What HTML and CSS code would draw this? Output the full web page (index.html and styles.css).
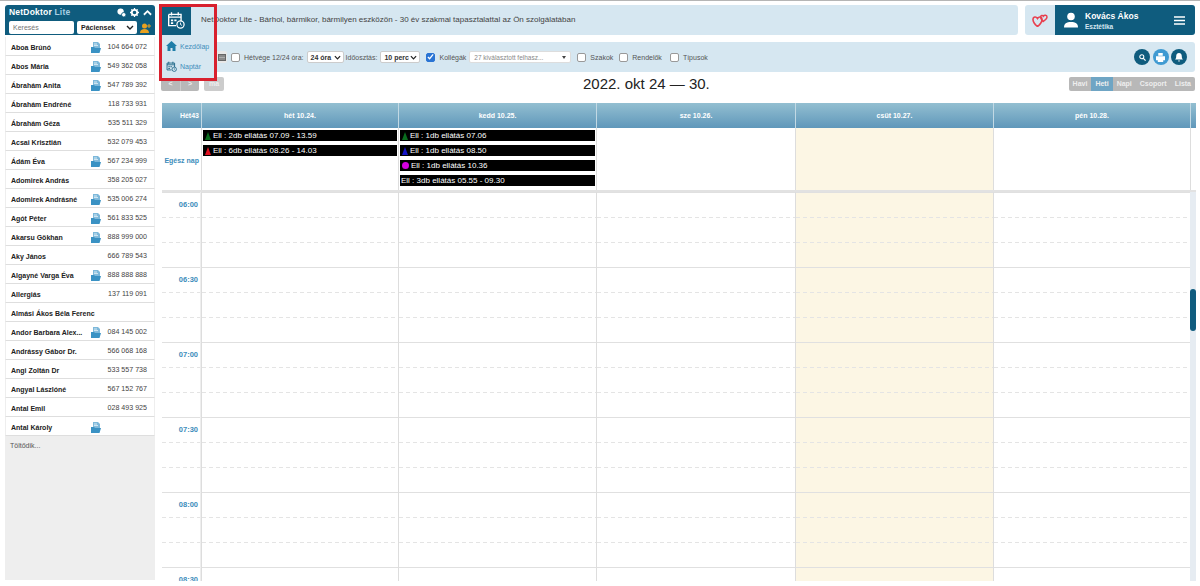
FILE: index.html
```html
<!DOCTYPE html>
<html lang="en">
<head>
    <meta charset="UTF-8">
    <meta name="viewport" content="width=device-width, initial-scale=1.0">
    <title>NetDoktor Lite - Naptár</title>
    <link rel="stylesheet" href="styles.css">
</head>
<body>
    <svg class="icon-defs" width="0" height="0">
        <symbol id="i-doc" viewBox="0 0 10 11">
            <path d="M2 0h5l2 2v4H2z" fill="#7db8da"/>
            <path d="M3 2h3M3 3.600h4" stroke="#fff" stroke-width=".7"/>
            <path d="M0 5h3l1 1h6L8.500 11H0z" fill="#3a92c4"/>
        </symbol>
        <symbol id="i-cal" viewBox="0 0 16 16">
            <path d="M1.500 3h11v6M8 13H1.500V3" fill="none" stroke="currentColor" stroke-width="1.200"/>
            <path d="M4 1v3M10 1v3M1.500 5.500h11" stroke="currentColor" stroke-width="1.200"/>
            <path d="M3.500 7.500h2v1.500h-2zM6.500 7.500h2v1.500h-2zM3.500 10h2v1.500h-2z" fill="currentColor"/>
            <circle cx="12" cy="12" r="3.200" fill="none" stroke="currentColor" stroke-width="1.100"/>
            <path d="M12 10.300V12l1.300.8" fill="none" stroke="currentColor" stroke-width=".8"/>
        </symbol>
        <symbol id="i-chev" viewBox="0 0 8 5">
            <path d="M1 1l3 3 3-3" fill="none" stroke="#222" stroke-width="1.400"/>
        </symbol>
    </svg>

    <aside class="sidebar">
        <div class="side-head">
            <div class="side-title">
                <span class="brand">NetDoktor <em>Lite</em></span>
                <span class="side-tools">
                    <svg width="9" height="9" viewBox="0 0 10 10"><circle cx="4" cy="4" r="3.500" fill="#fff"/><circle cx="7.500" cy="7.500" r="2.500" fill="#fff" stroke="#0f5c7e"/></svg>
                    <svg width="9" height="9" viewBox="0 0 10 10"><circle cx="5" cy="5" r="3" fill="none" stroke="#fff" stroke-width="2"/><path d="M5 0v2M5 8v2M0 5h2M8 5h2M1.500 1.500l1.400 1.400M7.100 7.100l1.400 1.400M1.500 8.500l1.400-1.400M7.100 2.900l1.400-1.400" stroke="#fff" stroke-width="1.400"/></svg>
                    <svg width="9" height="7" viewBox="0 0 10 7"><path d="M1 6l4-4 4 4" fill="none" stroke="#fff" stroke-width="2"/></svg>
                </span>
            </div>
            <div class="side-search">
                <input class="search-input" type="text" placeholder="Keresés">
                <span class="search-select">Páciensek<svg width="8" height="5"><use href="#i-chev"/></svg></span>
                <svg width="11" height="10" viewBox="0 0 11 10"><circle cx="4.500" cy="3" r="2.500" fill="#e9a11f"/><path d="M0 10c0-3 2-4 4.500-4S9 7 9 10z" fill="#e9a11f"/><path d="M9 1v4M7 3h4" stroke="#e9a11f"/></svg>
            </div>
        </div>
        <ul class="patients">
            <li><b>Aboa Brúnó</b><svg class="doc"><use href="#i-doc"/></svg><span>104 664 072</span></li>
            <li><b>Abos Mária</b><svg class="doc"><use href="#i-doc"/></svg><span>549 362 058</span></li>
            <li><b>Ábrahám Anita</b><svg class="doc"><use href="#i-doc"/></svg><span>547 789 392</span></li>
            <li><b>Ábrahám Endréné</b><span>118 733 931</span></li>
            <li><b>Ábrahám Géza</b><span>535 511 329</span></li>
            <li><b>Acsai Krisztián</b><span>532 079 453</span></li>
            <li><b>Ádám Éva</b><svg class="doc"><use href="#i-doc"/></svg><span>567 234 999</span></li>
            <li><b>Adomirek András</b><span>358 205 027</span></li>
            <li><b>Adomirek Andrásné</b><svg class="doc"><use href="#i-doc"/></svg><span>535 006 274</span></li>
            <li><b>Agót Péter</b><svg class="doc"><use href="#i-doc"/></svg><span>561 833 525</span></li>
            <li><b>Akarsu Gökhan</b><svg class="doc"><use href="#i-doc"/></svg><span>888 999 000</span></li>
            <li><b>Aky János</b><span>666 789 543</span></li>
            <li><b>Algayné Varga Éva</b><svg class="doc"><use href="#i-doc"/></svg><span>888 888 888</span></li>
            <li><b>Allergiás</b><span>137 119 091</span></li>
            <li><b>Almási Ákos Béla Ferenc</b></li>
            <li><b>Andor Barbara Alex...</b><svg class="doc"><use href="#i-doc"/></svg><span>084 145 002</span></li>
            <li><b>Andrássy Gábor Dr.</b><span>566 068 168</span></li>
            <li><b>Angi Zoltán Dr</b><span>533 557 738</span></li>
            <li><b>Angyal Lászlóné</b><span>567 152 767</span></li>
            <li><b>Antal Emil</b><span>028 493 925</span></li>
            <li><b>Antal Károly</b><svg class="doc"><use href="#i-doc"/></svg></li>
        </ul>
        <div class="loading">Töltődik...</div>
    </aside>

    <main class="main">
        <div class="top-row">
            <div class="banner">NetDoktor Lite - Bárhol, bármikor, bármilyen eszközön - 30 év szakmai tapasztalattal az Ön szolgálatában</div>
            <div class="user-box">
                <div class="user-logo">
                    <svg width="16" height="13" viewBox="0 0 16 13"><path d="M5.500 12.500C2.500 10 .8 7.500 1 5 1.200 2.800 4 2.200 5.500 4.500 7 2.200 9.800 2.800 10 5c.2 2.500-1.500 5-4.500 7.500z" fill="none" stroke="#e8404f" stroke-width="1.600"/><path d="M11 7.500C9.500 6 8.500 4.500 8.500 3 8.700 1.300 10.500.9 11.300 2.200 12.300 .9 15 1 15 3c0 1.800-2 3.300-4 4.500z" fill="none" stroke="#e8404f" stroke-width="1.500"/></svg>
                </div>
                <div class="user-info">
                    <svg width="16" height="16" viewBox="0 0 16 16"><circle cx="8" cy="4.500" r="3.800" fill="#fff"/><path d="M1 15.500c0-4 2.500-5.500 7-5.500s7 1.500 7 5.500z" fill="#fff"/></svg>
                    <div class="user-name"><b>Kovács Ákos</b><small>Esztétika</small></div>
                    <svg width="11" height="9" viewBox="0 0 11 9"><path d="M0 1h11M0 4.500h11M0 8h11" stroke="#fff" stroke-width="1.600"/></svg>
                </div>
            </div>
        </div>

        <div class="toolbar">
            <span class="cal-btn"><svg width="8" height="8" viewBox="0 0 8 8"><path d="M0 1h8v7H0z" fill="#666"/><path d="M1 3h6M1 4.500h6M1 6h6" stroke="#ddd" stroke-width=".6"/></svg></span>
            <span class="check"></span><label>Hétvége 12/24 óra:</label>
            <span class="mini-select s-ora">24 óra<svg width="7" height="5"><use href="#i-chev"/></svg></span>
            <label>Időosztás:</label>
            <span class="mini-select s-perc">10 perc<svg width="7" height="5"><use href="#i-chev"/></svg></span>
            <span class="check on"><svg width="8" height="8" viewBox="0 0 8 8"><path d="M1 4l2 2 4-5" fill="none" stroke="#fff" stroke-width="1.400"/></svg></span><label>Kollégák</label>
            <span class="multi">27 kiválasztott felhasz...<i></i></span>
            <span class="check"></span><label class="wide">Szakok</label>
            <span class="check"></span><label class="wider">Rendelők</label>
            <span class="check"></span><label>Típusok</label>
            <span class="round-btns">
                <span class="round"><svg width="7" height="7" viewBox="0 0 8 8"><circle cx="3.200" cy="3.200" r="2.300" fill="none" stroke="#fff" stroke-width="1.200"/><path d="M5 5l2.500 2.500" stroke="#fff" stroke-width="1.400"/></svg></span>
                <span class="round light"><svg width="9" height="9" viewBox="0 0 10 10"><path d="M2.500 0h5v3h-5zM0 3.500h10V8H8v2H2V8H0z" fill="#fff"/></svg></span>
                <span class="round"><svg width="8" height="9" viewBox="0 0 8 9"><path d="M4 0c2 0 2.800 1.500 2.800 3.500 0 1.500.4 2.300 1.200 3H0c.8-.7 1.200-1.500 1.200-3C1.200 1.500 2 0 4 0zM3 7.500h2L4 9z" fill="#fff"/></svg></span>
            </span>
        </div>

        <div class="cal-nav">
            <div class="nav-left">
                <span class="btn-group arrows"><span>&lt;</span><span>&gt;</span></span>
                <span class="btn-group today"><span>ma</span></span>
            </div>
            <h2>2022. okt 24 — 30.</h2>
            <div class="btn-group views"><span>Havi</span><span class="active">Heti</span><span>Napi</span><span>Csoport</span><span>Lista</span></div>
        </div>

        <div class="calendar">
            <div class="cal-row cal-head">
                <div class="axis">Hét43</div><div>hét 10.24.</div><div>kedd 10.25.</div><div>sze 10.26.</div><div>csüt 10.27.</div><div>pén 10.28.</div><div></div>
            </div>
            <div class="cal-row all-day">
                <div class="axis">Egész nap</div>
                <div class="day">
                    <div class="evt"><i class="tri green"></i>Ell : 2db ellátás 07.09 - 13.59</div>
                    <div class="evt"><i class="tri red"></i>Ell : 6db ellátás 08.26 - 14.03</div>
                </div>
                <div class="day">
                    <div class="evt"><i class="tri green"></i>Ell : 1db ellátás 07.06</div>
                    <div class="evt"><i class="tri blue"></i>Ell : 1db ellátás 08.50</div>
                    <div class="evt"><i class="dot"></i>Ell : 1db ellátás 10.36</div>
                    <div class="evt">Ell : 3db ellátás 05.55 - 09.30</div>
                </div>
                <div class="day"></div>
                <div class="day today-col"></div>
                <div class="day"></div>
                <div class="day"></div>
            </div>
            <div class="cal-row time-grid">
                <div class="slots times"><b>06:00</b><b>06:30</b><b>07:00</b><b>07:30</b><b>08:00</b><b>08:30</b></div>
                <div class="slots"></div>
                <div class="slots"></div>
                <div class="slots"></div>
                <div class="slots today-col"></div>
                <div class="slots"></div>
                <div class="scroll"><span class="thumb"></span></div>
            </div>
        </div>

        <nav class="quick-menu">
            <div class="quick-icon"><svg width="18" height="18"><use href="#i-cal"/></svg></div>
            <a href="#"><svg width="11" height="10" viewBox="0 0 11 10"><path d="M5.500 0L11 5H9.500v5H6.500V7h-2v3h-3V5H0z" fill="#1f7ea8"/></svg>Kezdőlap</a>
            <a href="#"><svg width="11" height="11"><use href="#i-cal"/></svg>Naptár</a>
        </nav>
        <div class="highlight"></div>
    </main>
</body>
</html>
```

FILE: styles.css
```css
* {
    box-sizing: border-box;
}

html, body {
    height: 100%;
    overflow: hidden;
}

body {
    margin: 0;
    padding: 5px;
    display: flex;
    gap: 5px;
    background: #fff;
    border-top: 1px solid #b5b5b5;
    font-family: "Liberation Sans", Arial, sans-serif;
    font-size: 7.5px;
    color: #333;
}

.icon-defs {
    position: absolute;
}

/* Sidebar */
.sidebar {
    width: 150px;
    flex: none;
    display: flex;
    flex-direction: column;
    height: 575px;
    margin-top: -1px;
}

.side-head {
    height: 30px;
    background: #0f5c7e;
    border-radius: 3px 3px 0 0;
    padding: 2px 3px 0 4px;
}

.side-title {
    display: flex;
    justify-content: space-between;
    align-items: center;
    height: 10px;
    margin-bottom: 4px;
}

.brand {
    color: #fff;
    font-size: 8.5px;
    font-weight: bold;
    letter-spacing: .2px;
}

.brand em {
    font-style: normal;
    color: #a9cfe3;
}

.side-tools {
    display: flex;
    gap: 4px;
    align-items: center;
}

.side-search {
    display: flex;
    align-items: center;
    gap: 3px;
}

.search-input {
    width: 65px;
    height: 13px;
    border: 0;
    border-radius: 2px;
    padding: 0 4px;
    font: 7px "Liberation Sans", Arial, sans-serif;
}

.search-select {
    width: 60px;
    height: 13px;
    border-radius: 2px;
    padding: 0 3px 0 4px;
    background: #fff;
    display: flex;
    align-items: center;
    justify-content: space-between;
    color: #222;
    font-size: 7px;
    font-weight: bold;
}

.patients {
    list-style: none;
    margin: 0;
    padding: 2px 0 0;
}

.patients li {
    height: 19px;
    display: flex;
    align-items: center;
    padding: 2px 7px 0 5px;
    border-bottom: 1px solid #dedede;
    border-left: 1px solid #eee;
    border-right: 1px solid #eee;
    color: #222;
}

.patients b {
    flex: 1;
    font-size: 7px;
    white-space: nowrap;
}

.patients span {
    white-space: nowrap;
    font-size: 7.1px;
    color: #444;
}

.doc {
    width: 10px;
    height: 11px;
    margin-right: 7px;
}

.patients li:last-child .doc {
    margin-right: 46px;
}

.loading {
    flex: 1;
    background: #eee;
    padding: 6px 5px;
    font-size: 7px;
    color: #555;
}

/* Main area */
.main {
    flex: 1;
    min-width: 0;
    position: relative;
    display: flex;
    flex-direction: column;
    margin-top: -1px;
}

.top-row {
    display: flex;
    gap: 7px;
    height: 30px;
}

.banner {
    flex: 1;
    background: #d6e7f1;
    border-radius: 3px;
    padding-left: 41px;
    line-height: 30px;
    font-size: 8px;
    color: #444;
}

.user-box {
    width: 170px;
    display: flex;
    background: #d6e7f1;
    border-radius: 3px;
    overflow: hidden;
}

.user-logo {
    width: 30px;
    display: flex;
    align-items: center;
    justify-content: center;
}

.user-info {
    flex: 1;
    background: #0f5c7e;
    display: flex;
    align-items: center;
    padding: 0 10px 0 8px;
    gap: 6px;
    color: #fff;
}

.user-name {
    flex: 1;
    display: flex;
    flex-direction: column;
    gap: 2px;
}

.user-name b {
    font-size: 8.5px;
}

.user-name small {
    font-size: 6.5px;
    font-weight: bold;
    color: #d6e7f1;
}

.toolbar {
    margin-top: 7px;
    height: 30px;
    background: #d6e7f1;
    border-radius: 3px;
    display: flex;
    align-items: center;
    padding: 0 8px 0 56px;
    font-size: 7px;
    color: #555;
}

.toolbar label {
    margin-right: 3px;
    white-space: nowrap;
}

.toolbar label.wide {
    margin-right: 6px;
}

.toolbar label.wider {
    margin-right: 8px;
}

.cal-btn {
    width: 11px;
    height: 12px;
    background: #e8e8e8;
    display: flex;
    align-items: center;
    justify-content: center;
    margin-right: 4px;
    border-radius: 0 2px 2px 0;
}

.check {
    width: 9px;
    height: 9px;
    flex: none;
    background: #fff;
    border: 1px solid #999;
    border-radius: 2px;
    margin-right: 4px;
    display: flex;
    align-items: center;
    justify-content: center;
}

.check.on {
    background: #2a74d4;
    border-color: #2a74d4;
    margin-left: 6px;
}

.mini-select {
    height: 12px;
    flex: none;
    border: 1px solid #ccc;
    border-radius: 2px;
    background: #fff;
    padding: 0 2px 0 3px;
    margin-right: 2px;
    display: flex;
    align-items: center;
    justify-content: space-between;
    color: #333;
    font-weight: bold;
    white-space: nowrap;
}

.s-ora {
    width: 37px;
}

.s-perc {
    width: 40px;
    margin-right: 0;
}

.multi {
    width: 102px;
    height: 12px;
    flex: none;
    background: #fff;
    border: 1px solid #ddd;
    border-radius: 2px;
    margin-right: 6px;
    padding: 0 4px;
    display: flex;
    align-items: center;
    justify-content: space-between;
    color: #888;
    font-size: 6.5px;
    white-space: nowrap;
}

.multi i {
    border: 2.5px solid transparent;
    border-top: 3px solid #444;
    border-bottom: 0;
}

.round-btns {
    margin-left: auto;
    display: flex;
    gap: 2.5px;
}

.round {
    width: 16px;
    height: 16px;
    border-radius: 50%;
    background: #0f5c7e;
    display: flex;
    align-items: center;
    justify-content: center;
}

.round.light {
    background: #3f9ad2;
}

/* Calendar toolbar */
.cal-nav {
    height: 14px;
    margin-top: 5px;
    display: flex;
    align-items: center;
}

.cal-nav h2 {
    margin: 0;
    font-size: 15px;
    font-weight: normal;
    color: #222;
    line-height: 14px;
}

.nav-left {
    width: 423px;
    padding-left: 1px;
    display: flex;
    gap: 5px;
}

.btn-group {
    display: inline-flex;
    height: 14px;
    background: #b8b8b8;
    border-radius: 2px;
    color: #eee;
    font-size: 7px;
    font-weight: bold;
    overflow: hidden;
}

.btn-group span {
    line-height: 14px;
    padding: 0 4px;
}

.arrows span {
    width: 19px;
    text-align: center;
    padding: 0;
}

.arrows span + span {
    border-left: 1px solid #ccc;
}

.today span {
    width: 20px;
    text-align: center;
    padding: 0;
}

.today {
    background: #ccc;
}

.views {
    margin-left: auto;
}

.views span.active {
    background: #6fa5c4;
}

/* Calendar grid */
.calendar {
    margin: 12px -1px 0 2px;
    height: 478px;
    overflow: hidden;
}

.cal-row {
    display: grid;
    grid-template-columns: 39px 197px 198px 199px 198px 197px 6px;
}

.cal-head {
    height: 25px;
    background: linear-gradient(#93bfd1, #5f97ba);
    color: #fff;
    font-size: 7px;
    font-weight: bold;
    text-align: center;
    line-height: 25px;
}

.cal-head > div {
    border-left: 1px solid #c2d9e4;
}

.cal-head .axis {
    border-left: 0;
    color: #fff;
    text-align: right;
    padding-right: 2px;
}

.all-day {
    height: 64px;
    border-bottom: 2px solid #e2e2e2;
}

.axis {
    color: #3d8dbb;
    font-weight: bold;
}

.all-day .axis {
    text-align: right;
    padding-right: 2px;
    align-self: center;
    font-size: 7px;
    padding-top: 2px;
}

.day {
    border-left: 1px solid #ddd;
    padding: 2px 1px 0 1px;
    display: flex;
    flex-direction: column;
    gap: 4px;
}

.evt {
    height: 11px;
    background: #000;
    color: #fff;
    font-size: 8px;
    line-height: 11px;
    padding-left: 1px;
    white-space: nowrap;
    display: flex;
    align-items: center;
}

.tri {
    width: 0;
    height: 0;
    border: 3.5px solid transparent;
    border-top: 0;
    border-bottom: 8px solid;
    margin: 0 2px 0 1px;
}

.tri.green {
    border-bottom-color: #0a6b1e;
}

.tri.red {
    border-bottom-color: #e01020;
}

.tri.blue {
    border-bottom-color: #1616c8;
}

.dot {
    width: 7px;
    height: 7px;
    border-radius: 50%;
    background: #d400e0;
    margin: 0 2px 0 1px;
}

.today-col {
    background: #fcf6e4;
}

.time-grid {
    height: 400px;
}

.slots {
    position: relative;
    border-left: 1px solid #ddd;
    background-image: repeating-linear-gradient(#e0e0e0 0 1px, transparent 1px 75px);
}

/* dashed lines every 25px, cut into dashes with a mask */
.slots::before {
    content: "";
    position: absolute;
    inset: 0;
    background: repeating-linear-gradient(transparent 0 25px, #e4e4e4 25px 26px, transparent 26px 50px, #e4e4e4 50px 51px, transparent 51px 75px);
    -webkit-mask-image: repeating-linear-gradient(90deg, #000 0 4px, transparent 4px 7px);
    mask-image: repeating-linear-gradient(90deg, #000 0 4px, transparent 4px 7px);
}

.times {
    border-left: 0;
    border-right: 1px solid #eee;
    display: grid;
    grid-auto-rows: 75px;
    text-align: right;
    padding-right: 2px;
    font-size: 7.5px;
    color: #3d8dbb;
}

.times b {
    padding-top: 8px;
    position: relative;
}

.scroll {
    position: relative;
    background: #e6ecf2;
}

.thumb {
    position: absolute;
    top: 97px;
    left: 0;
    width: 6px;
    height: 42px;
    border-radius: 3px;
    background: #0f5c7e;
}

/* Overlays */
.quick-menu {
    position: absolute;
    left: 0;
    top: 0;
    width: 55px;
    height: 75px;
    background: linear-gradient(transparent 30px, #d6e7f1 30px);
}

.quick-icon {
    width: 31px;
    height: 30px;
    background: #0f5c7e;
    color: #fff;
    display: flex;
    align-items: center;
    justify-content: center;
}

.quick-menu a {
    display: flex;
    align-items: center;
    gap: 3px;
    height: 20px;
    padding-left: 6px;
    margin-top: 1px;
    color: #3d8dbb;
    font-size: 7px;
    text-decoration: none;
}

.quick-menu a + a {
    margin-top: 0;
}

.quick-menu a svg {
    color: #0f5c7e;
}

.highlight {
    position: absolute;
    left: -1px;
    top: -1px;
    width: 58px;
    height: 77px;
    border: 3px solid #d8202e;
    pointer-events: none;
}
```
